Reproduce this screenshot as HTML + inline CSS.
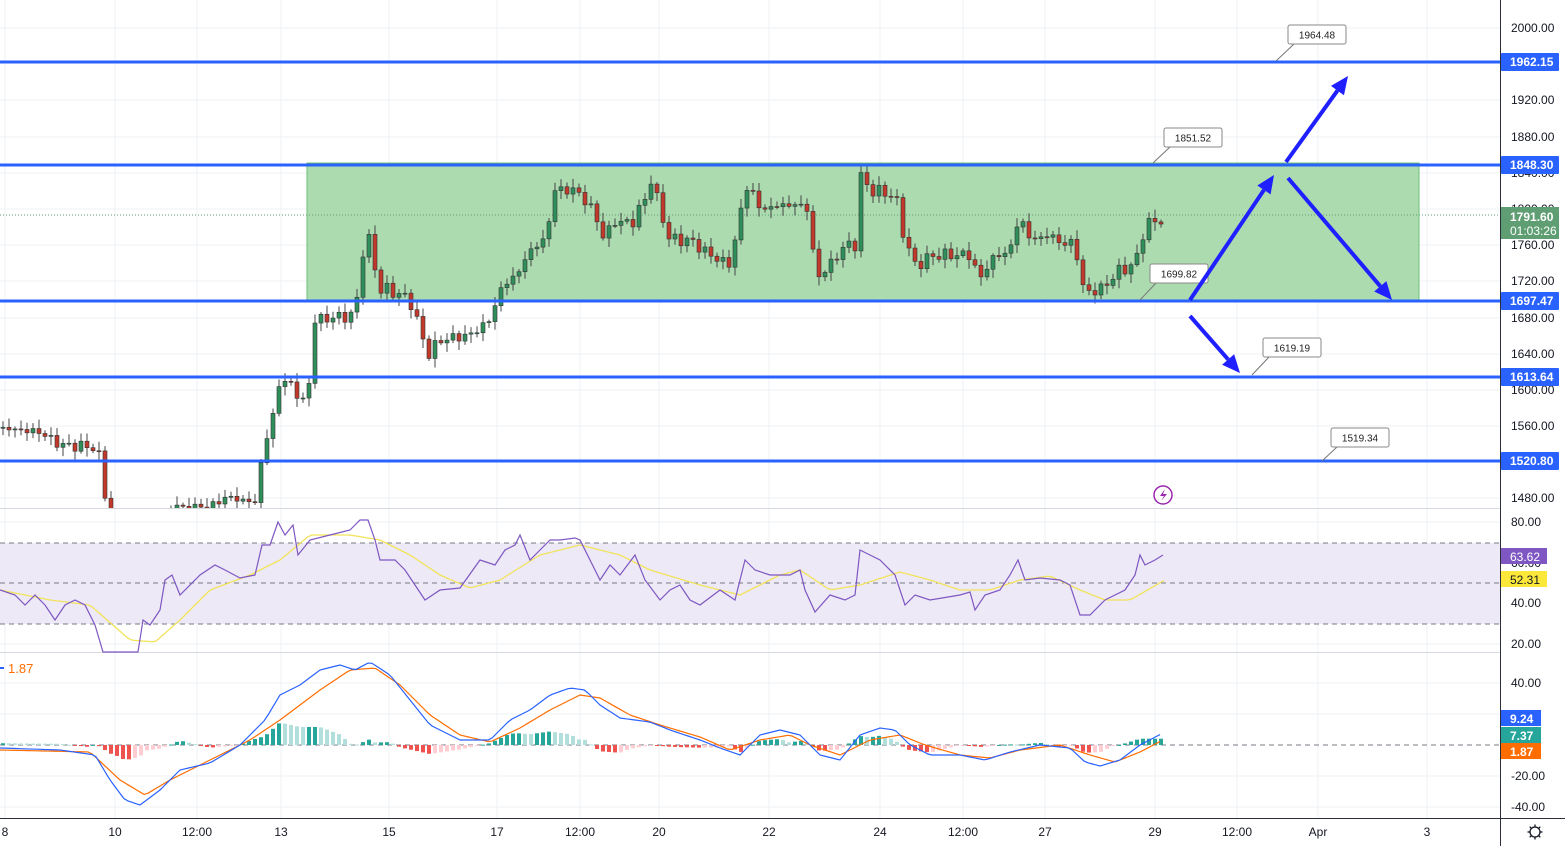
<!DOCTYPE html>
<html><head><meta charset="utf-8"><style>
body{margin:0;background:#fff;width:1565px;height:846px;overflow:hidden;font-family:"Liberation Sans",sans-serif}
svg{display:block}
</style></head><body>
<svg id="s" width="1565" height="846" xmlns="http://www.w3.org/2000/svg" font-family="Liberation Sans, sans-serif"></svg>
<script>
const S=document.getElementById('s');let h='';
function interp(pts,x){for(let i=1;i<pts.length;i++){if(x<=pts[i][0]){const a=pts[i-1],b=pts[i];const t=(x-a[0])/((b[0]-a[0])||1);return a[1]+(b[1]-a[1])*t;}}return pts[pts.length-1][1];}
// grid
const gx=[5,115,197,281,389,497,580,659,769,880,963,1045,1155,1237,1318,1427];
gx.forEach(x=>h+=`<line x1="${x}" y1="0" x2="${x}" y2="818" stroke="#eef0f4"/>`);
const py=[28,100,137,173,209,245,281,318,354,390,426,462,498];
py.forEach(y=>h+=`<line x1="0" y1="${y}" x2="1500" y2="${y}" stroke="#eef0f4"/>`);
[522,563,603,644,683,714,776,807].forEach(y=>h+=`<line x1="0" y1="${y}" x2="1500" y2="${y}" stroke="#eef0f4"/>`);
// green box
h+=`<rect x="307" y="163" width="1112" height="139" fill="#acdbb0" stroke="#6cbf74" stroke-width="1"/>`;
h+=`<line x1="0" y1="215" x2="1500" y2="215" stroke="#5f9e73" stroke-dasharray="1,2"/>`;
// candles
const C=[[0,428],[40,432],[60,445],[95,447],[100,460],[106,500],[112,525],[168,525],[172,500],[180,510],[215,505],[225,497],[258,503],[262,450],[270,430],[280,380],[295,385],[300,410],[310,380],[315,320],[330,318],[355,315],[365,235],[372,245],[378,290],[390,290],[410,300],[420,330],[428,355],[440,340],[470,335],[490,320],[500,290],[520,270],[530,250],[545,240],[555,190],[575,190],[585,200],[595,215],[605,240],[615,220],[630,225],[645,200],[650,175],[660,210],[670,240],[690,240],[710,255],[730,265],[745,190],[750,185],[760,210],[780,205],[800,205],[810,210],[815,280],[830,265],[845,245],[855,245],[860,175],[870,190],[895,195],[905,240],[915,265],[935,255],[970,255],[980,280],[990,260],[1010,250],[1020,215],[1030,240],[1050,235],[1065,245],[1075,240],[1080,280],[1085,292],[1100,290],[1120,270],[1135,265],[1145,225],[1160,220],[1165,215]];
let prev=428,cs='';
for(let x=3;x<=1165;x+=6){let c=interp(C,x)+Math.sin(x*1.7)*4+Math.sin(x*0.37)*3;const o=prev;prev=c;
 const top=Math.min(o,c),bot=Math.max(o,c);const hi=top-2-Math.abs(Math.sin(x*2.3))*7,lo=bot+2+Math.abs(Math.cos(x*1.3))*7;
 const up=c<o;const col=up?'#2f8f5b':'#c0392b';
 cs+=`<line x1="${x}" y1="${hi}" x2="${x}" y2="${lo}" stroke="#444" stroke-width="1"/><rect x="${x-2}" y="${top}" width="4" height="${Math.max(1,bot-top)}" fill="${col}" stroke="#333" stroke-width="0.6"/>`;}
h+=`<svg x="0" y="0" width="1500" height="508">${cs}</svg>`;
// blue lines
[62,165,301,377,461].forEach(y=>h+=`<line x1="0" y1="${y}" x2="1500" y2="${y}" stroke="#2962ff" stroke-width="3"/>`);
// callouts
function co(x,y,t,px,py){h+=`<line x1="${x+6}" y1="${y+19}" x2="${px}" y2="${py}" stroke="#777"/><rect x="${x}" y="${y}" width="58" height="19" rx="2" fill="#fff" stroke="#888"/><text x="${x+29}" y="${y+13.5}" font-size="10" text-anchor="middle" fill="#222">${t}</text>`;}
co(1288,25,'1964.48',1276,61);co(1164,128,'1851.52',1153,163);co(1150,264,'1699.82',1140,300);co(1263,338,'1619.19',1252,375);co(1331,428,'1519.34',1322,461);
// arrows
function ar(x1,y1,x2,y2){const a=Math.atan2(y2-y1,x2-x1),L=18,W=8;const bx=x2-L*Math.cos(a),by=y2-L*Math.sin(a);
 h+=`<line x1="${x1}" y1="${y1}" x2="${bx}" y2="${by}" stroke="#1f1fff" stroke-width="4"/><polygon points="${x2},${y2} ${bx+W*Math.sin(a)},${by-W*Math.cos(a)} ${bx-W*Math.sin(a)},${by+W*Math.cos(a)}" fill="#1f1fff"/>`;}
ar(1190,300,1274,175);ar(1286,162,1348,76);ar(1288,178,1392,300);ar(1190,316,1240,373);
h+=`<circle cx="1163" cy="495" r="9" fill="#fff" stroke="#9c27b0" stroke-width="1.5"/><path d="M1165 489 L1160 496 L1164 496 L1161 501 L1167 494 L1163 494 Z" fill="#9c27b0"/>`;
// panes
h+=`<line x1="0" y1="508.5" x2="1565" y2="508.5" stroke="#d6d9e0"/><line x1="0" y1="652.5" x2="1565" y2="652.5" stroke="#d6d9e0"/>`;
h+=`<rect x="0" y="543" width="1500" height="81" fill="#ede9f7"/>`;
[543,583,624].forEach(y=>h+=`<line x1="0" y1="${y}" x2="1500" y2="${y}" stroke="#787b86" stroke-dasharray="5,4"/>`);
const R=[[0,590],[15,595],[25,605],[35,595],[45,605],[55,620],[65,605],[75,600],[85,605],[95,625],[103,652],[138,652],[143,620],[150,625],[160,610],[165,580],[172,575],[180,595],[200,575],[215,565],[225,570],[240,578],[255,575],[262,545],[270,545],[278,522],[285,535],[293,525],[298,555],[310,540],[330,535],[350,530],[360,520],[368,520],[375,540],[380,560],[395,560],[405,570],[415,585],[425,600],[440,590],[460,588],[480,560],[495,565],[505,550],[515,545],[520,535],[530,560],[540,550],[550,540],[560,540],[575,538],[580,540],[590,560],[600,580],[610,565],[620,575],[635,555],[645,580],[660,600],[670,590],[680,585],[690,600],[700,605],[720,590],[735,600],[745,560],[755,570],[770,575],[790,575],[800,570],[805,590],[815,612],[830,595],[845,600],[855,595],[860,550],[870,555],[880,560],[895,575],[905,605],[915,595],[930,600],[960,595],[970,592],[975,610],[985,595],[1000,590],[1010,575],[1018,560],[1025,580],[1040,578],[1060,580],[1070,585],[1080,615],[1090,615],[1105,600],[1125,590],[1135,575],[1140,555],[1145,565],[1155,560],[1163,555]];
const RM=[[0,590],[50,600],[90,605],[130,640],[155,642],[180,620],[210,590],[250,575],[280,560],[310,535],[350,535],[380,540],[410,555],[440,575],[470,588],[500,580],[540,555],[580,545],[620,555],[650,570],[700,585],[740,595],[780,575],[800,570],[830,590],[860,585],[900,572],[930,580],[960,590],[990,590],[1020,580],[1050,576],[1080,590],[1105,600],[1130,600],[1165,580]];
function pl(p,c,w){return `<polyline points="${p.map(q=>q.join(',')).join(' ')}" fill="none" stroke="${c}" stroke-width="${w||1.2}"/>`}
function sm(p){const o=[];for(let x=p[0][0];x<=p[p.length-1][0];x+=4)o.push([x,interp(p,x)]);return o;}
h+=pl(sm(RM),'#f2e35b',1.3)+pl(R,'#7e57c2',1.2);
// MACD
const B=[[0,748],[60,750],[95,755],[110,780],[125,800],[140,805],[160,790],[180,770],[210,763],[240,745],[265,720],[280,695],[300,685],[320,670],[340,665],[355,670],[370,662],[390,675],[410,700],[430,725],[460,740],[490,740],[510,720],[530,710],[550,695],[570,688],[585,690],[600,705],[620,718],[650,722],[670,730],[700,740],[720,748],[740,755],[760,735],[780,730],[800,735],[820,755],[840,760],[860,735],[880,728],[895,730],[910,745],[930,755],[960,755],[985,760],[1010,752],[1040,745],[1070,748],[1085,762],[1100,766],[1120,760],[1140,745],[1163,733]];
const O=[[0,750],[90,752],[120,780],[145,795],[170,780],[210,760],[250,740],[280,720],[320,690],[350,670],[375,668],[400,685],[430,715],[460,735],[490,742],[520,728],[550,710],[580,695],[600,698],[630,715],[660,725],[700,737],[730,750],[760,740],[790,735],[810,745],[840,755],[870,740],[900,735],[925,745],[960,755],[990,758],[1020,750],[1060,745],[1090,755],[1115,762],[1140,752],[1163,740]];
h+=`<line x1="0" y1="745" x2="1500" y2="745" stroke="#787b86" stroke-dasharray="5,4"/>`;
let pv=0;
for(let x=3;x<=1163;x+=6){const v=(interp(O,x)-interp(B,x))*0.9;const col=v>=0?(v>=pv?'#26a69a':'#b2dfdb'):(v<=pv?'#ef5350':'#ffcdd2');pv=v;
 h+=`<rect x="${x-2}" y="${v>=0?745-v:745}" width="4" height="${Math.max(1,Math.abs(v))}" fill="${col}"/>`;}
h+=pl(sm(O),'#ff6d00',1.2)+pl(sm(B),'#2962ff',1.2);
h+=`<line x1="0" y1="668" x2="4" y2="668" stroke="#2962ff" stroke-width="2"/><text x="8" y="673" font-size="13" fill="#ff6d00">1.87</text>`;
// axes
h+=`<rect x="1501" y="0" width="64" height="846" fill="#fff"/><line x1="1500.5" y1="0" x2="1500.5" y2="846" stroke="#2a2e39"/><line x1="0" y1="818.5" x2="1565" y2="818.5" stroke="#2a2e39"/>`;
const pl2=[[28,'2000.00'],[100,'1920.00'],[137,'1880.00'],[173,'1840.00'],[209,'1800.00'],[245,'1760.00'],[281,'1720.00'],[318,'1680.00'],[354,'1640.00'],[390,'1600.00'],[426,'1560.00'],[462,'1520.00'],[498,'1480.00'],[522,'80.00'],[563,'60.00'],[603,'40.00'],[644,'20.00'],[683,'40.00'],[807,'-40.00'],[776,'-20.00']];
pl2.forEach(([y,t])=>h+=`<text x="1511" y="${y+4}" font-size="12" fill="#131722">${t}</text>`);
function tag(y,hh,c,t,tc){h+=`<rect x="1501" y="${y}" width="58" height="${hh}" rx="1" fill="${c}"/><text x="1510" y="${y+13}" font-size="12" font-weight="bold" fill="${tc||'#fff'}">${t}</text>`;}
tag(53,18,'#2962ff','1962.15');tag(156,18,'#2962ff','1848.30');tag(292,18,'#2962ff','1697.47');tag(368,18,'#2962ff','1613.64');tag(452,18,'#2962ff','1520.80');
h+=`<rect x="1501" y="207" width="58" height="32" fill="#5f9e73"/><text x="1510" y="221" font-size="12" font-weight="bold" fill="#fff">1791.60</text><text x="1510" y="235" font-size="12" fill="#fff">01:03:26</text>`;
h+=`<rect x="1501" y="548" width="46" height="16" fill="#7e57c2"/><text x="1510" y="561" font-size="12" fill="#fff">63.62</text>`;
h+=`<rect x="1501" y="571" width="46" height="16" fill="#fbe83a"/><text x="1510" y="584" font-size="12" fill="#131722">52.31</text>`;
h+=`<rect x="1501" y="710" width="40" height="16" fill="#2962ff"/><text x="1510" y="723" font-size="12" font-weight="bold" fill="#fff">9.24</text>`;
h+=`<rect x="1501" y="727" width="40" height="16" fill="#26a69a"/><text x="1510" y="740" font-size="12" font-weight="bold" fill="#fff">7.37</text>`;
h+=`<rect x="1501" y="743" width="40" height="16" fill="#ff6d00"/><text x="1510" y="756" font-size="12" font-weight="bold" fill="#fff">1.87</text>`;
const tl=[[5,'8'],[115,'10'],[197,'12:00'],[281,'13'],[389,'15'],[497,'17'],[580,'12:00'],[659,'20'],[769,'22'],[880,'24'],[963,'12:00'],[1045,'27'],[1155,'29'],[1237,'12:00'],[1318,'Apr'],[1427,'3']];
tl.forEach(([x,t])=>h+=`<text x="${x}" y="836" font-size="12" text-anchor="middle" fill="#131722">${t}</text>`);
h+=`<circle cx="1535" cy="832" r="5" fill="none" stroke="#131722" stroke-width="1.3"/>`;
for(let i=0;i<8;i++){const a=i*Math.PI/4;h+=`<line x1="${1535+5*Math.cos(a)}" y1="${832+5*Math.sin(a)}" x2="${1535+7.5*Math.cos(a)}" y2="${832+7.5*Math.sin(a)}" stroke="#131722" stroke-width="1.3"/>`;}
S.innerHTML=h;
</script>
</body></html>
